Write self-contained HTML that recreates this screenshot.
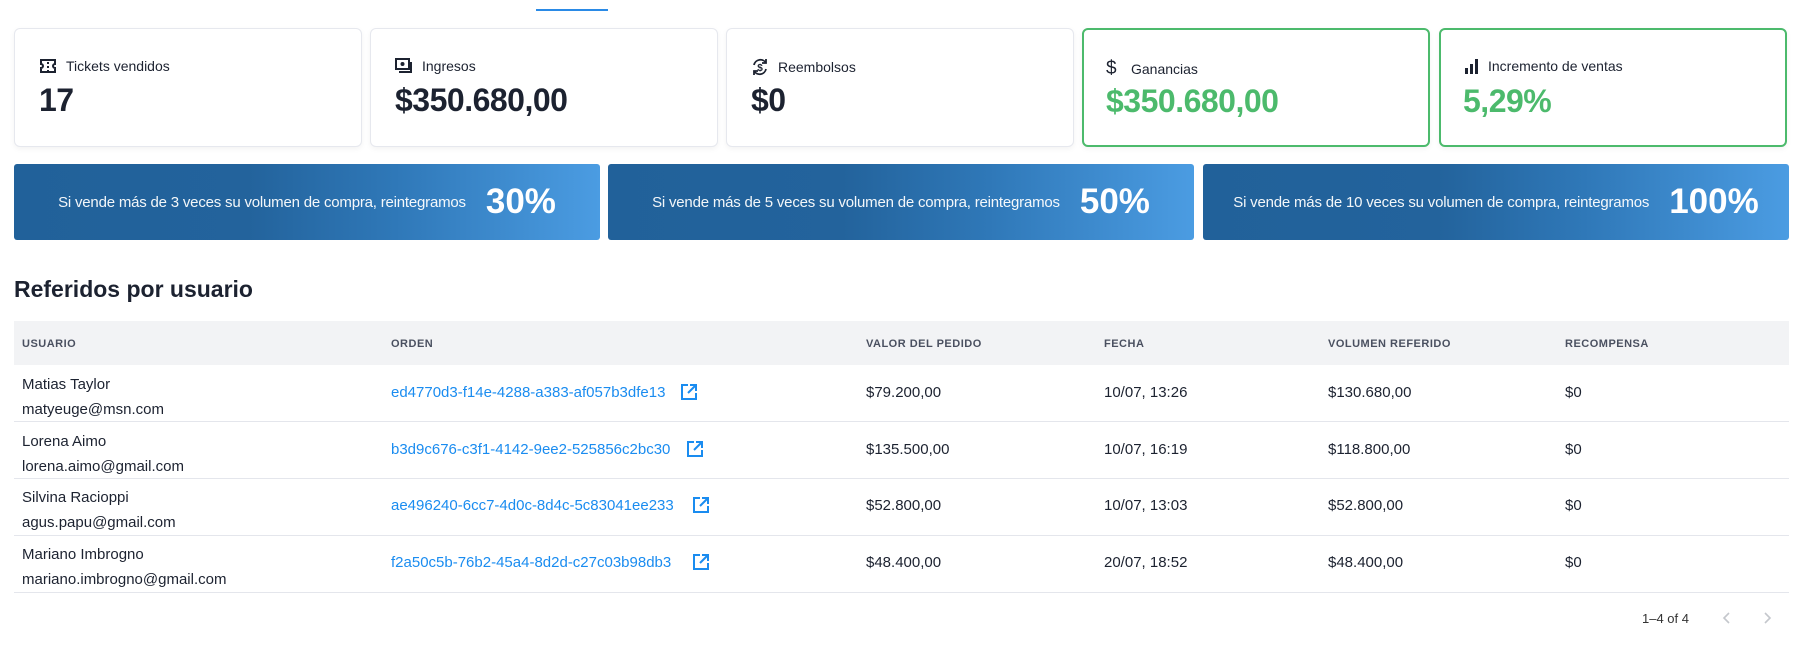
<!DOCTYPE html>
<html><head><meta charset="utf-8"><style>
*{box-sizing:border-box;margin:0;padding:0}
body{width:1812px;height:654px;background:#fff;font-family:"Liberation Sans",sans-serif;color:#1c2230;position:relative;overflow:hidden}
.tab{position:absolute;left:536px;top:9px;width:72px;height:2px;background:#2a8ae6}
.card{position:absolute;top:28px;width:348px;height:119px;border:1px solid #e6e8ee;border-radius:6px;box-shadow:0 2px 6px rgba(0,0,0,.05);background:#fff}
.card.g{border:2px solid #4cba6c}
.lab{position:absolute;left:24px;top:29px;font-size:14px;display:flex;align-items:center;gap:9px;color:#1c2230}
.val{position:absolute;left:24px;top:53px;font-size:32px;font-weight:bold;letter-spacing:-0.5px}
.g .val{color:#4cba6c;left:22px}
.g .lab{left:22px;top:28px}
.ban{position:absolute;top:164px;width:586px;height:76px;border-radius:3px;background:linear-gradient(90deg,#21619a 0%,#23639c 40%,#2f78b8 65%,#4b9ce2 100%);color:#fff;display:flex;align-items:center;justify-content:center;gap:20px}
.ban span{font-size:15px;opacity:.95;letter-spacing:-0.2px}
.ban b{font-size:35px;font-weight:bold}
h2{position:absolute;left:14px;top:276px;font-size:23px;font-weight:bold;color:#1c2230}
.th{position:absolute;left:14px;top:321px;width:1775px;height:44px;background:#f2f3f5}
.c{position:absolute;font-size:15px;color:#1c2230}
.h{font-size:11px;font-weight:bold;color:#4a5060;letter-spacing:.5px;top:338px}
.line{position:absolute;left:14px;width:1775px;height:1px;background:#e4e6ec}
a{color:#1a8cf0;text-decoration:none}
</style></head><body>
<div class="tab"></div>

<div class="card" style="left:14px"><div class="lab"><svg width="18" height="16" viewBox="0 0 18 16"><path d="M2 2h14v4a2 2 0 0 0 0 4v4H2v-4a2 2 0 0 0 0-4z" fill="none" stroke="#1c2230" stroke-width="2"/><path d="M9 4v2M9 8v2M9 12v1" stroke="#1c2230" stroke-width="2"/></svg>Tickets vendidos</div><div class="val">17</div></div>
<div class="card" style="left:370px"><div class="lab"><svg width="18" height="16" viewBox="0 0 18 16"><rect x="1" y="1" width="13" height="10" fill="none" stroke="#1c2230" stroke-width="2"/><circle cx="7.5" cy="6" r="2" fill="#1c2230"/><path d="M4 14h12V4" fill="none" stroke="#1c2230" stroke-width="2"/></svg>Ingresos</div><div class="val">$350.680,00</div></div>
<div class="card" style="left:726px"><div class="lab"><svg width="18" height="18" viewBox="0 0 18 18"><path d="M3 7a6.5 6.5 0 0 1 12-2M15 11a6.5 6.5 0 0 1-12 2" fill="none" stroke="#1c2230" stroke-width="1.8"/><path d="M15 1v4h-4M3 17v-4h4" fill="none" stroke="#1c2230" stroke-width="1.8"/><text x="9" y="13" font-size="10" font-weight="bold" text-anchor="middle" fill="#1c2230" font-family="Liberation Sans">$</text></svg>Reembolsos</div><div class="val">$0</div></div>
<div class="card g" style="left:1082px"><div class="lab"><span style="font-size:19px;width:16px">$</span>Ganancias</div><div class="val">$350.680,00</div></div>
<div class="card g" style="left:1439px"><div class="lab"><svg width="16" height="16" viewBox="0 0 16 16"><rect x="2" y="10" width="3" height="6" fill="#1c2230"/><rect x="7" y="6" width="3" height="10" fill="#1c2230"/><rect x="12" y="1" width="3" height="15" fill="#1c2230"/></svg>Incremento de ventas</div><div class="val">5,29%</div></div>

<div class="ban" style="left:14px"><span>Si vende más de 3 veces su volumen de compra, reintegramos</span><b>30%</b></div>
<div class="ban" style="left:608px"><span>Si vende más de 5 veces su volumen de compra, reintegramos</span><b>50%</b></div>
<div class="ban" style="left:1203px"><span>Si vende más de 10 veces su volumen de compra, reintegramos</span><b>100%</b></div>

<h2>Referidos por usuario</h2>
<div class="th"></div>
<div class="c h" style="left:22px">USUARIO</div>
<div class="c h" style="left:391px">ORDEN</div>
<div class="c h" style="left:866px">VALOR DEL PEDIDO</div>
<div class="c h" style="left:1104px">FECHA</div>
<div class="c h" style="left:1328px">VOLUMEN REFERIDO</div>
<div class="c h" style="left:1565px">RECOMPENSA</div>

<div class="c" style="left:22px;top:372px;line-height:25px">Matias Taylor<br>matyeuge@msn.com</div>
<div class="c" style="left:391px;top:384px"><a>ed4770d3-f14e-4288-a383-af057b3dfe13</a></div>
<div class="c" style="left:866px;top:384px">$79.200,00</div>
<div class="c" style="left:1104px;top:384px">10/07, 13:26</div>
<div class="c" style="left:1328px;top:384px">$130.680,00</div>
<div class="c" style="left:1565px;top:384px">$0</div>
<div class="line" style="top:421px"></div>

<div class="c" style="left:22px;top:429px;line-height:25px">Lorena Aimo<br>lorena.aimo@gmail.com</div>
<div class="c" style="left:391px;top:441px"><a>b3d9c676-c3f1-4142-9ee2-525856c2bc30</a></div>
<div class="c" style="left:866px;top:441px">$135.500,00</div>
<div class="c" style="left:1104px;top:441px">10/07, 16:19</div>
<div class="c" style="left:1328px;top:441px">$118.800,00</div>
<div class="c" style="left:1565px;top:441px">$0</div>
<div class="line" style="top:478px"></div>

<div class="c" style="left:22px;top:485px;line-height:25px">Silvina Racioppi<br>agus.papu@gmail.com</div>
<div class="c" style="left:391px;top:497px"><a>ae496240-6cc7-4d0c-8d4c-5c83041ee233</a></div>
<div class="c" style="left:866px;top:497px">$52.800,00</div>
<div class="c" style="left:1104px;top:497px">10/07, 13:03</div>
<div class="c" style="left:1328px;top:497px">$52.800,00</div>
<div class="c" style="left:1565px;top:497px">$0</div>
<div class="line" style="top:535px"></div>

<div class="c" style="left:22px;top:542px;line-height:25px">Mariano Imbrogno<br>mariano.imbrogno@gmail.com</div>
<div class="c" style="left:391px;top:554px"><a>f2a50c5b-76b2-45a4-8d2d-c27c03b98db3</a></div>
<div class="c" style="left:866px;top:554px">$48.400,00</div>
<div class="c" style="left:1104px;top:554px">20/07, 18:52</div>
<div class="c" style="left:1328px;top:554px">$48.400,00</div>
<div class="c" style="left:1565px;top:554px">$0</div>
<div class="line" style="top:592px"></div>

<svg style="position:absolute;left:680px;top:383px" width="18" height="18" viewBox="0 0 18 18"><path d="M8 2H2v14h14v-6M10 2h6v6M16 2L8 10" fill="none" stroke="#1a8cf0" stroke-width="2"/></svg>
<svg style="position:absolute;left:686px;top:440px" width="18" height="18" viewBox="0 0 18 18"><path d="M8 2H2v14h14v-6M10 2h6v6M16 2L8 10" fill="none" stroke="#1a8cf0" stroke-width="2"/></svg>
<svg style="position:absolute;left:692px;top:496px" width="18" height="18" viewBox="0 0 18 18"><path d="M8 2H2v14h14v-6M10 2h6v6M16 2L8 10" fill="none" stroke="#1a8cf0" stroke-width="2"/></svg>
<svg style="position:absolute;left:692px;top:553px" width="18" height="18" viewBox="0 0 18 18"><path d="M8 2H2v14h14v-6M10 2h6v6M16 2L8 10" fill="none" stroke="#1a8cf0" stroke-width="2"/></svg>

<div class="c" style="left:1642px;top:611px;font-size:13px;color:#333">1–4 of 4</div>
<svg style="position:absolute;left:1720px;top:610px" width="14" height="16" viewBox="0 0 14 16"><path d="M9 3L4 8l5 5" fill="none" stroke="#c4c7cc" stroke-width="1.6"/></svg>
<svg style="position:absolute;left:1760px;top:610px" width="14" height="16" viewBox="0 0 14 16"><path d="M5 3l5 5-5 5" fill="none" stroke="#c4c7cc" stroke-width="1.6"/></svg>
</body></html>
